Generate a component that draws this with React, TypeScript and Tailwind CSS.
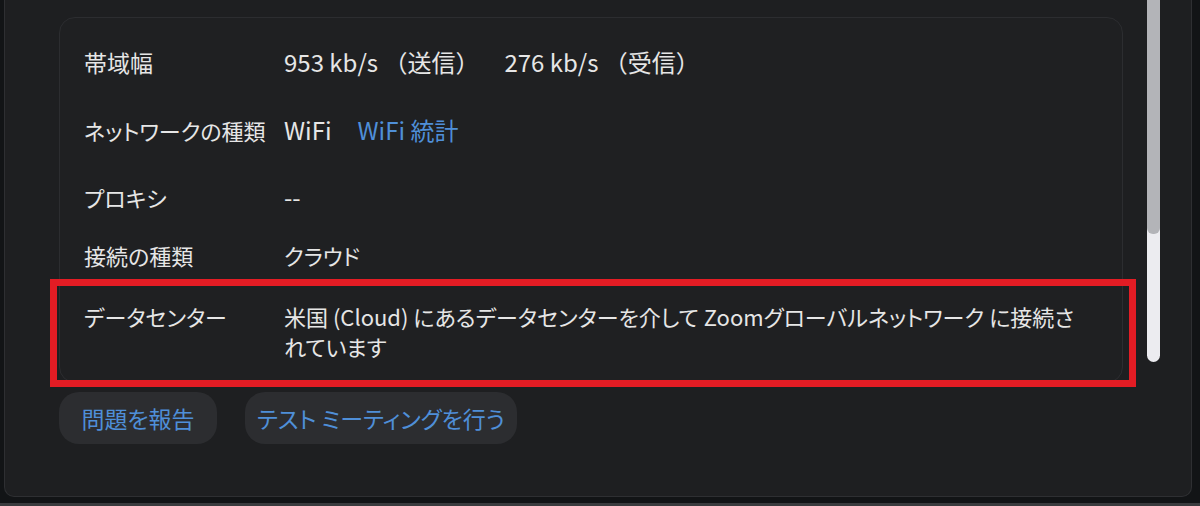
import React from 'react';

export default function App() {
  return (
    <div className="relative w-[1200px] h-[506px] overflow-hidden bg-[#121416] font-['Noto_Sans_CJK_JP','Noto_Sans',sans-serif] text-[#e6e6e6]">
      {/* Window */}
      <div className="ml-[4px] mr-[8px] h-[497px] flex rounded-b-[10px] border-x border-b border-[#2e2f32] bg-[#1e1f21]">
        <div className="pl-[54px] pt-[17px] w-[1119px] flex flex-col">
          {/* Stats card */}
          <div className="w-[1064px] rounded-[16px] border border-[#2c2d30] bg-[#1f2022] pt-[29px] pb-[21px] pl-[24px] text-[22px] leading-[30px] [font-feature-settings:'palt']">
            <div className="flex">
              <div className="w-[200px] shrink-0 text-[23px]">帯域幅</div>
              <div className="flex gap-[25px] text-[24px] [font-feature-settings:normal]">
                <span>953 kb/s （送信）</span>
                <span>276 kb/s （受信）</span>
              </div>
            </div>
            <div className="flex mt-[38px]">
              <div className="w-[200px] shrink-0">ネットワークの種類</div>
              <div className="flex gap-[26px] text-[24px]">
                <span>WiFi</span>
                <span className="text-[#4f8fd8]">WiFi 統計</span>
              </div>
            </div>
            <div className="flex mt-[37px]">
              <div className="w-[200px] shrink-0">プロキシ</div>
              <div className="text-[24px]">--</div>
            </div>
            <div className="flex mt-[28px]">
              <div className="w-[200px] shrink-0">接続の種類</div>
              <div>クラウド</div>
            </div>
            <div className="flex mt-[31px]">
              <div className="w-[200px] shrink-0">データセンター</div>
              <div className="whitespace-nowrap">
                米国 (Cloud) にあるデータセンターを介して Zoomグローバルネットワーク に接続さ
                <br />
                れています
              </div>
            </div>
          </div>

          {/* Actions */}
          <div className="mt-[9px] flex gap-[28px] text-[23px] text-[#4f8fd8] [font-feature-settings:'palt']">
            <button className="h-[52px] w-[158px] rounded-[20px] bg-[#2c2d30] flex items-center justify-center">
              問題を報告
            </button>
            <button className="h-[52px] w-[272px] rounded-[20px] bg-[#2c2d30] flex items-center justify-center">
              テスト ミーティングを行う
            </button>
          </div>
        </div>

        {/* Scrollbar */}
        <div className="ml-[23px] w-[13px] h-[362px] rounded-b-[7px] bg-[#ececf0] relative">
          <div className="absolute inset-x-0 top-0 h-[234px] rounded-b-[6px] bg-[#b3b4b8]" />
        </div>
      </div>
      <div className="mt-[6px] h-[3px] bg-[#3a3b3e]" />

      {/* Annotation */}
      <div className="absolute left-[50px] top-[279px] w-[1086px] h-[108px] border-[7px] border-[#e31c24]" />
    </div>
  );
}
